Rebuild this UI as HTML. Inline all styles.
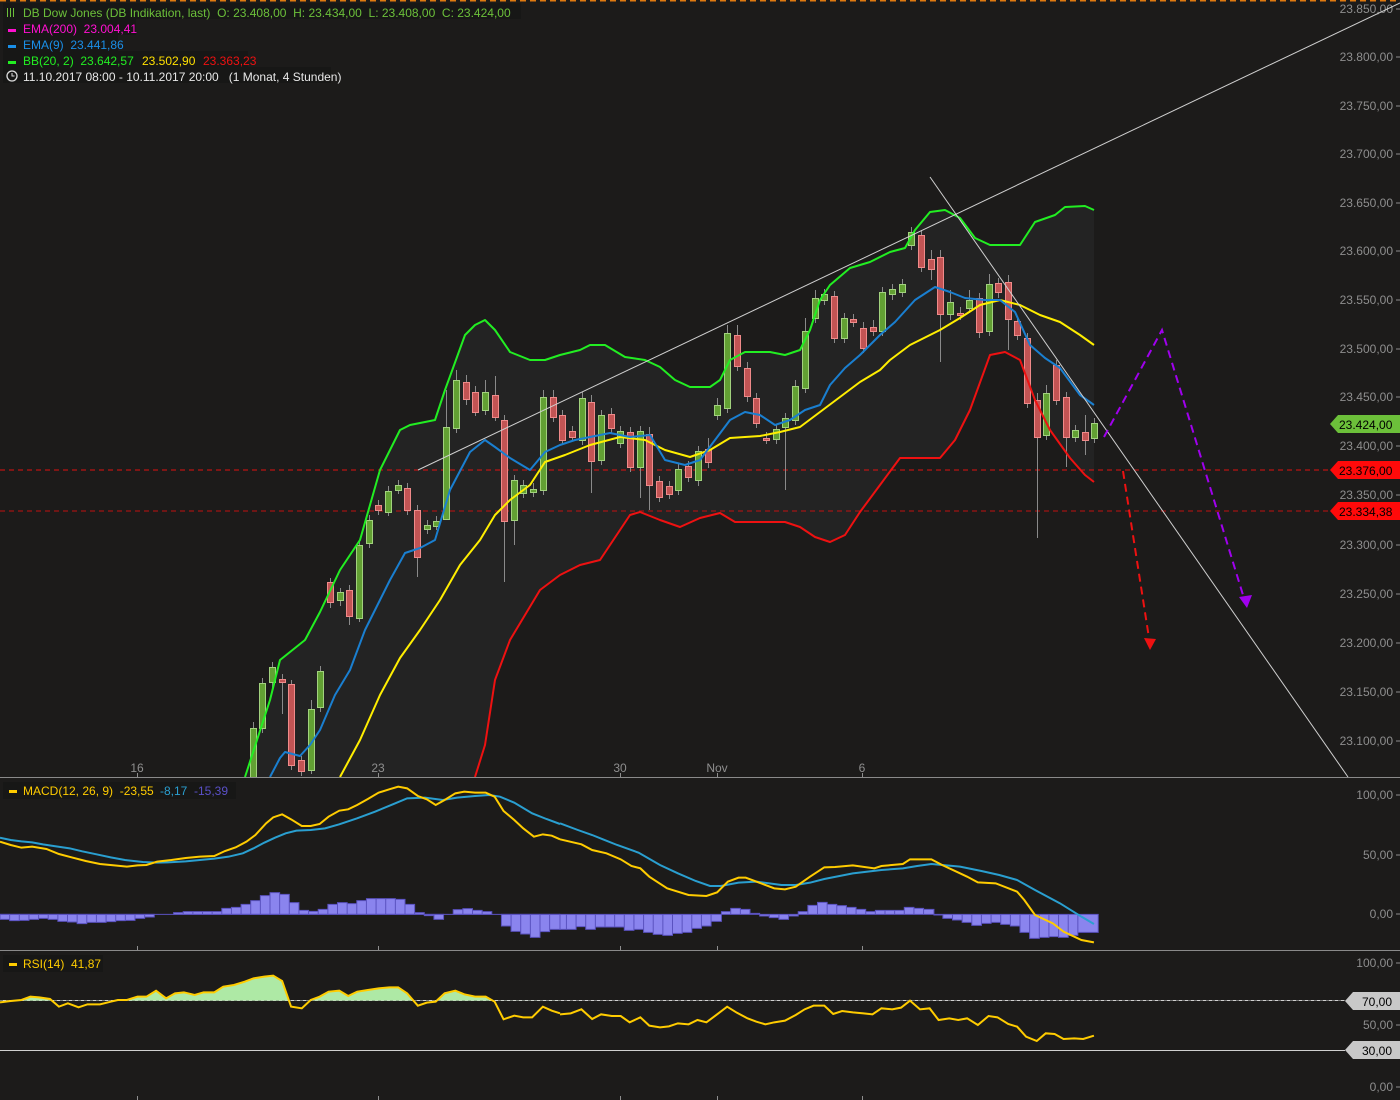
<!DOCTYPE html>
<html><head><meta charset="utf-8"><style>
html,body{margin:0;padding:0;background:#1c1b1a;}
svg{display:block;font-family:"Liberation Sans",sans-serif;}
svg text{white-space:pre;}
</style></head><body>
<svg width="1400" height="1100" viewBox="0 0 1400 1100" xmlns="http://www.w3.org/2000/svg" xml:space="preserve">
<rect width="1400" height="1100" fill="#1c1b1a"/>
<line x1="0" y1="0.5" x2="1400" y2="0.5" stroke="#e07a10" stroke-width="2" stroke-dasharray="6,4"/>

<polygon fill="#232323" points="245,777 270,700 280,660 295,648 305,640 320,612 340,570 360,540 380,470 400,430 410,425 435,420 445,390 465,335 475,325 485,320 495,330 510,352 530,360 545,360 560,355 580,350 590,345 605,345 625,357 645,360 660,367 675,380 690,387 710,387 720,380 730,360 745,352 770,352 785,355 800,350 810,330 820,300 830,285 850,268 870,262 890,252 905,248 915,230 930,212 945,210 960,218 975,238 990,245 1020,245 1035,222 1055,215 1065,207 1085,206 1094,210 1094,482 1085,475 1070,458 1050,430 1035,400 1020,360 1005,352 990,355 970,410 955,440 940,458 900,458 880,485 860,512 845,535 830,542 815,537 800,527 785,522 735,522 720,513 700,518 680,527 660,520 640,512 630,515 610,545 600,560 580,565 560,575 540,590 525,615 510,640 495,680 485,745 475,777"/>

<g fill="#8e8e8e" font-size="12" text-anchor="end">
<text x="1393" y="13">23.850,00</text><text x="1393" y="61">23.800,00</text><text x="1393" y="110">23.750,00</text><text x="1393" y="158">23.700,00</text><text x="1393" y="207">23.650,00</text><text x="1393" y="255">23.600,00</text><text x="1393" y="304">23.550,00</text><text x="1393" y="353">23.500,00</text><text x="1393" y="401">23.450,00</text><text x="1393" y="450">23.400,00</text><text x="1393" y="499">23.350,00</text><text x="1393" y="549">23.300,00</text><text x="1393" y="598">23.250,00</text><text x="1393" y="647">23.200,00</text><text x="1393" y="696">23.150,00</text><text x="1393" y="745">23.100,00</text>
<text x="1393" y="799">100,00</text><text x="1393" y="859">50,00</text><text x="1393" y="918">0,00</text>
<text x="1393" y="967">100,00</text><text x="1393" y="1029">50,00</text><text x="1393" y="1091">0,00</text>
</g>
<g stroke="#8e8e8e" stroke-width="1">
<path d="M1396 9h4M1396 57h4M1396 106h4M1396 154h4M1396 203h4M1396 251h4M1396 300h4M1396 349h4M1396 397h4M1396 446h4M1396 495h4M1396 545h4M1396 594h4M1396 643h4M1396 692h4M1396 741h4M1396 795h4M1396 855h4M1396 914h4M1396 963h4M1396 1025h4M1396 1087h4"/>
</g>

<g fill="#8e8e8e" font-size="12" text-anchor="middle">
<text x="137" y="772">16</text><text x="378" y="772">23</text><text x="620" y="772">30</text><text x="717" y="772">Nov</text><text x="862" y="772">6</text>
</g>
<g stroke="#8e8e8e"><path d="M137.5 773v4M378.5 773v4M620.5 773v4M717.5 773v4M862.5 773v4M137.5 946v4M378.5 946v4M620.5 946v4M717.5 946v4M862.5 946v4M137.5 1096v4M378.5 1096v4M620.5 1096v4M717.5 1096v4M862.5 1096v4"/></g>

<line x1="0" y1="470" x2="1330" y2="470" stroke="#e01010" stroke-dasharray="5,4"/>
<line x1="0" y1="511" x2="1330" y2="511" stroke="#c01010" stroke-dasharray="5,4"/>

<clipPath id="main"><rect x="0" y="0" width="1400" height="777"/></clipPath>
<g clip-path="url(#main)">
<g stroke="#8a8a8a" stroke-width="1">
<path d="M253.5 722v60M262.5 678v55M272.5 662v26M282.5 674v40M291.5 680v90M301.5 756v20M311.5 700v74M320.5 666v46M330.5 578v30M340.5 588v18M349.5 585v40M359.5 540v82M369.5 515v33M378.5 500v15M388.5 486v30M398.5 480v14M407.5 483v32M417.5 505v72M427.5 520v14M436.5 516v14M446.5 390v130M456.5 370v63M466.5 375v30M475.5 386v30M485.5 380v35M495.5 376v45M504.5 415v167M514.5 475v70M523.5 480v18M533.5 483v14M543.5 390v105M553.5 390v32M562.5 410v35M572.5 426v15M582.5 392v53M591.5 395v98M601.5 410v55M611.5 408v25M620.5 426v22M630.5 427v45M640.5 426v72M649.5 427v83M659.5 476v26M669.5 481v18M678.5 464v31M688.5 461v21M698.5 446v40M708.5 438v30M717.5 398v22M727.5 325v88M737.5 325v46M747.5 362v40M756.5 393v35M766.5 432v12M776.5 424v20M785.5 413v77M795.5 380v45M805.5 318v75M815.5 290v33M824.5 289v16M834.5 291v52M844.5 313v30M853.5 314v13M863.5 322v31M873.5 320v16M882.5 287v49M892.5 284v16M902.5 279v18M911.5 227v23M921.5 230v42M931.5 250v30M940.5 250v112M950.5 290v30M960.5 307v13M969.5 290v23M979.5 293v45M989.5 274v62M998.5 278v20M1008.5 275v75M1017.5 316v24M1027.5 333v75M1037.5 393v145M1046.5 385v55M1056.5 360v45M1066.5 392v75M1075.5 425v17M1085.5 415v40M1094.5 418v25"/>
</g>
<g fill="#62a033" stroke="#a2d27e" stroke-width="1">
<rect x="250.5" y="728.5" width="6" height="50"/><rect x="259.5" y="683.5" width="6" height="45"/><rect x="269.5" y="667.5" width="6" height="15"/><rect x="308.5" y="709.5" width="6" height="61"/><rect x="317.5" y="671.5" width="6" height="36"/><rect x="337.5" y="592.5" width="6" height="8"/><rect x="356.5" y="545.5" width="6" height="73"/><rect x="366.5" y="520.5" width="6" height="23"/><rect x="385.5" y="491.5" width="6" height="21"/><rect x="395.5" y="485.5" width="6" height="5"/><rect x="424.5" y="525.5" width="6" height="4"/><rect x="433.5" y="521.5" width="6" height="5"/><rect x="443.5" y="427.5" width="6" height="92"/><rect x="453.5" y="380.5" width="6" height="48"/><rect x="482.5" y="392.5" width="6" height="18"/><rect x="511.5" y="480.5" width="6" height="40"/><rect x="520.5" y="485.5" width="6" height="8"/><rect x="530.5" y="489.5" width="6" height="3"/><rect x="540.5" y="397.5" width="6" height="93"/><rect x="579.5" y="398.5" width="6" height="42"/><rect x="598.5" y="415.5" width="6" height="45"/><rect x="617.5" y="431.5" width="6" height="12"/><rect x="637.5" y="431.5" width="6" height="36"/><rect x="675.5" y="469.5" width="6" height="21"/><rect x="695.5" y="451.5" width="6" height="29"/><rect x="714.5" y="405.5" width="6" height="10"/><rect x="724.5" y="333.5" width="6" height="75"/><rect x="773.5" y="429.5" width="6" height="10"/><rect x="782.5" y="418.5" width="6" height="9"/><rect x="792.5" y="386.5" width="6" height="34"/><rect x="802.5" y="331.5" width="6" height="57"/><rect x="812.5" y="298.5" width="6" height="20"/><rect x="821.5" y="294.5" width="6" height="6"/><rect x="841.5" y="318.5" width="6" height="20"/><rect x="879.5" y="292.5" width="6" height="39"/><rect x="889.5" y="289.5" width="6" height="5"/><rect x="899.5" y="284.5" width="6" height="8"/><rect x="908.5" y="232.5" width="6" height="13"/><rect x="947.5" y="302.5" width="6" height="12"/><rect x="966.5" y="300.5" width="6" height="8"/><rect x="986.5" y="284.5" width="6" height="47"/><rect x="1043.5" y="393.5" width="6" height="42"/><rect x="1072.5" y="430.5" width="6" height="7"/><rect x="1091.5" y="423.5" width="6" height="15"/>
</g>
<g fill="#c25454" stroke="#f08a8a" stroke-width="1">
<rect x="279.5" y="679.5" width="6" height="3"/><rect x="288.5" y="684.5" width="6" height="81"/><rect x="298.5" y="760.5" width="6" height="11"/><rect x="327.5" y="582.5" width="6" height="20"/><rect x="346.5" y="590.5" width="6" height="26"/><rect x="375.5" y="505.5" width="6" height="5"/><rect x="404.5" y="488.5" width="6" height="22"/><rect x="414.5" y="510.5" width="6" height="47"/><rect x="463.5" y="382.5" width="6" height="17"/><rect x="472.5" y="392.5" width="6" height="20"/><rect x="492.5" y="395.5" width="6" height="22"/><rect x="501.5" y="420.5" width="6" height="101"/><rect x="550.5" y="397.5" width="6" height="20"/><rect x="559.5" y="415.5" width="6" height="25"/><rect x="569.5" y="431.5" width="6" height="6"/><rect x="588.5" y="402.5" width="6" height="59"/><rect x="608.5" y="414.5" width="6" height="14"/><rect x="627.5" y="432.5" width="6" height="35"/><rect x="646.5" y="434.5" width="6" height="51"/><rect x="656.5" y="481.5" width="6" height="16"/><rect x="666.5" y="486.5" width="6" height="8"/><rect x="685.5" y="466.5" width="6" height="11"/><rect x="705.5" y="449.5" width="6" height="13"/><rect x="734.5" y="335.5" width="6" height="31"/><rect x="744.5" y="368.5" width="6" height="28"/><rect x="753.5" y="398.5" width="6" height="25"/><rect x="763.5" y="438.5" width="6" height="2"/><rect x="831.5" y="296.5" width="6" height="42"/><rect x="850.5" y="319.5" width="6" height="3"/><rect x="860.5" y="328.5" width="6" height="20"/><rect x="870.5" y="327.5" width="6" height="4"/><rect x="918.5" y="235.5" width="6" height="32"/><rect x="928.5" y="259.5" width="6" height="10"/><rect x="937.5" y="257.5" width="6" height="57"/><rect x="957.5" y="313.5" width="6" height="2"/><rect x="976.5" y="298.5" width="6" height="34"/><rect x="995.5" y="283.5" width="6" height="9"/><rect x="1005.5" y="282.5" width="6" height="37"/><rect x="1014.5" y="321.5" width="6" height="14"/><rect x="1024.5" y="338.5" width="6" height="65"/><rect x="1034.5" y="400.5" width="6" height="37"/><rect x="1053.5" y="365.5" width="6" height="35"/><rect x="1063.5" y="397.5" width="6" height="40"/><rect x="1082.5" y="432.5" width="6" height="8"/>
</g>

<g fill="none" stroke-width="2" stroke-linejoin="round">
<polyline stroke="#ffee00" points="340,777 360,740 380,695 400,658 420,630 440,600 460,565 480,540 495,515 510,500 530,485 545,462 565,455 590,445 620,437 645,440 665,450 690,457 710,450 730,438 760,436 780,432 800,427 820,412 840,397 860,382 880,370 890,360 910,345 940,330 960,318 980,305 1000,300 1020,305 1040,315 1060,322 1080,335 1094,345"/>
<polyline stroke="#1a7fd0" points="270,777 280,758 285,752 300,756 310,745 320,730 335,695 350,670 365,630 380,600 390,580 405,553 420,548 435,540 450,490 470,452 485,440 495,447 510,458 530,470 545,452 560,445 575,440 590,437 610,433 630,437 650,435 665,460 685,465 700,460 715,440 730,420 745,412 760,415 775,425 790,420 805,410 820,405 830,385 845,368 860,355 880,335 895,322 915,300 935,287 950,292 965,298 985,300 1000,300 1015,312 1030,345 1045,358 1060,368 1080,395 1094,405"/>
<polyline stroke="#22ee22" points="245,777 270,700 280,660 295,648 305,640 320,612 340,570 360,540 380,470 400,430 410,425 435,420 445,390 465,335 475,325 485,320 495,330 510,352 530,360 545,360 560,355 580,350 590,345 605,345 625,357 645,360 660,367 675,380 690,387 710,387 720,380 730,360 745,352 770,352 785,355 800,350 810,330 820,300 830,285 850,268 870,262 890,252 905,248 915,230 930,212 945,210 960,218 975,238 990,245 1020,245 1035,222 1055,215 1065,207 1085,206 1094,210"/>
<polyline stroke="#ee1111" points="475,777 485,745 495,680 510,640 525,615 540,590 560,575 580,565 600,560 610,545 630,515 640,512 660,520 680,527 700,518 720,513 735,522 785,522 800,527 815,537 830,542 845,535 860,512 880,485 900,458 915,458 940,458 955,440 970,410 990,355 1005,352 1020,360 1035,400 1050,430 1070,458 1085,475 1094,482"/>
</g>
<line x1="418" y1="470" x2="1400" y2="3" stroke="#cfcfcf" stroke-width="1"/>
<line x1="930" y1="177" x2="1348" y2="777" stroke="#cfcfcf" stroke-width="1"/>
<polyline points="1104,437 1162,330 1243,595" fill="none" stroke="#a000ee" stroke-width="2" stroke-dasharray="8,5"/>
<polygon points="1239,597 1252,595 1247,608" fill="#a000ee"/>
<polyline points="1123,471 1149,638" fill="none" stroke="#ee1111" stroke-width="2" stroke-dasharray="8,5"/>
<polygon points="1144,638 1156,639 1150,650" fill="#ee1111"/>
</g>

<polygon points="1330,424 1338,415 1400,415 1400,433 1338,433" fill="#6cc03a"/>
<text x="1339" y="429" font-size="12" fill="#000">23.424,00</text>
<polygon points="1330,470 1338,461 1400,461 1400,479 1338,479" fill="#ff0a0a"/>
<text x="1339" y="475" font-size="12" fill="#000">23.376,00</text>
<polygon points="1330,511 1338,502 1400,502 1400,520 1338,520" fill="#ff0a0a"/>
<text x="1339" y="516" font-size="12" fill="#000">23.334,38</text>

<rect x="3" y="3" width="518" height="16" fill="#171716"/>
<rect x="3" y="19" width="133" height="16" fill="#171716"/>
<rect x="3" y="35" width="115" height="16" fill="#171716"/>
<rect x="3" y="51" width="245" height="16" fill="#171716"/>
<rect x="3" y="67" width="328" height="16" fill="#171716"/>
<g font-size="12">
<g stroke="#6cc03a" fill="none" stroke-width="1"><path d="M7.5 8v9M10.5 8v9M13.5 8v9"/></g>
<text x="23" y="17" fill="#6cc03a">DB Dow Jones (DB Indikation, last)  O: 23.408,00  H: 23.434,00  L: 23.408,00  C: 23.424,00</text>
<rect x="8" y="29" width="8" height="3" fill="#ff10d0"/><text x="23" y="33" fill="#ff10d0">EMA(200)  23.004,41</text>
<rect x="8" y="45" width="8" height="3" fill="#1a8fe8"/><text x="23" y="49" fill="#1a8fe8">EMA(9)  23.441,86</text>
<rect x="8" y="61" width="8" height="3" fill="#22ee22"/><text x="23" y="65" fill="#22ee22">BB(20, 2)  23.642,57</text><text x="142" y="65" fill="#ffe000">23.502,90</text><text x="203" y="65" fill="#ee1111">23.363,23</text>
<circle cx="12" cy="76" r="5" fill="none" stroke="#ddd" stroke-width="1.3"/><path d="M12 73v3h2.5" stroke="#ddd" fill="none"/>
<text x="23" y="81" fill="#e8e8e8">11.10.2017 08:00 - 10.11.2017 20:00   (1 Monat, 4 Stunden)</text>
</g>

<line x1="0" y1="777.5" x2="1400" y2="777.5" stroke="#8a8a8a"/>
<line x1="0" y1="950.5" x2="1400" y2="950.5" stroke="#8a8a8a"/>

<rect x="3" y="782" width="233" height="17" fill="#171716"/>
<g font-size="12"><rect x="9" y="790" width="8" height="3" fill="#ffcc00"/>
<text x="23" y="795" fill="#ffcc00">MACD(12, 26, 9)  -23,55</text><text x="160" y="795" fill="#2a9fd0">-8,17</text><text x="194" y="795" fill="#5a50c8">-15,39</text></g>

<g transform="translate(0,780) scale(0.35714,0.33333)">
<path fill="#8a84ee" stroke="#5a52c0" stroke-width="1" vector-effect="non-scaling-stroke" d="M0 403V418H27V403ZM27 403V422H54V403ZM54 403V421H81V403ZM81 403V418H108V403ZM108 403V415H135V403ZM135 403V418H162V403ZM162 403V424H189V403ZM189 403V426H216V403ZM216 403V431H243V403ZM243 403V427H270V403ZM270 403V427H297V403ZM297 403V425H324V403ZM324 403V422H351V403ZM351 403V421H378V403ZM378 403V415H405V403ZM405 403V411H432V403ZM486 403V398H513V403ZM513 403V395H540V403ZM540 403V395H567V403ZM567 403V395H594V403ZM594 403V395H621V403ZM621 403V385H648V403ZM648 403V382H675V403ZM675 403V373H702V403ZM702 403V362H729V403ZM729 403V347H756V403ZM756 403V338H783V403ZM783 403V343H810V403ZM810 403V368H837V403ZM837 403V391H864V403ZM864 403V394H891V403ZM891 403V388H918V403ZM918 403V373H945V403ZM945 403V368H972V403ZM972 403V371H999V403ZM999 403V362H1026V403ZM1026 403V356H1053V403ZM1053 403V356H1080V403ZM1080 403V356H1107V403ZM1107 403V358H1134V403ZM1134 403V373H1161V403ZM1161 403V398H1188V403ZM1188 403V407H1215V403ZM1215 403V418H1242V403ZM1269 403V389H1296V403ZM1296 403V386H1323V403ZM1323 403V391H1350V403ZM1350 403V395H1377V403ZM1404 403V438H1431V403ZM1431 403V454H1458V403ZM1458 403V462H1485V403ZM1485 403V472H1512V403ZM1512 403V455H1539V403ZM1539 403V448H1568V403Z"/>
<line x1="0" y1="403" x2="1568" y2="403" stroke="#5a52c0" vector-effect="non-scaling-stroke"/>
<polyline fill="none" stroke="#2a9fd0" stroke-width="2" vector-effect="non-scaling-stroke" points="0,173 30,180 60,184 90,187 120,193 150,198 195,205 230,214 270,223 310,232 350,240 400,246 440,248 470,247 520,244 560,240 600,236 640,230 680,220 710,205 740,188 770,173 800,160 830,152 870,150 910,145 950,133 1000,115 1050,95 1100,73 1140,55 1190,53 1240,60 1280,53 1330,48 1370,45 1400,50 1440,68 1490,100 1530,117 1568,132"/>
<polyline fill="none" stroke="#ffcc00" stroke-width="2" vector-effect="non-scaling-stroke" points="0,185 30,195 60,203 90,200 130,207 165,222 200,232 240,243 280,252 320,256 355,260 385,256 410,255 440,245 480,240 520,234 560,230 600,228 630,213 660,202 690,185 715,165 745,130 765,112 790,103 815,118 845,138 870,138 895,132 920,110 950,92 975,88 1000,75 1030,57 1060,38 1090,28 1115,20 1140,25 1170,48 1195,58 1220,75 1245,60 1275,40 1300,35 1330,38 1360,38 1385,50 1410,93 1440,120 1465,145 1495,170 1520,163 1545,167 1568,178"/>
</g>
<g transform="translate(560,780) scale(0.35714,0.33333)">
<path fill="#8a84ee" stroke="#5a52c0" stroke-width="1" vector-effect="non-scaling-stroke" d="M0 403V448H18V403ZM18 403V448H45V403ZM45 403V440H72V403ZM72 403V448H99V403ZM99 403V441H126V403ZM126 403V441H153V403ZM153 403V441H180V403ZM180 403V451H207V403ZM207 403V448H234V403ZM234 403V457H261V403ZM261 403V463H288V403ZM288 403V466H315V403ZM315 403V460H342V403ZM342 403V457H369V403ZM369 403V445H396V403ZM396 403V438H423V403ZM423 403V424H452V403ZM452 403V395H478V403ZM478 403V385H505V403ZM505 403V388H532V403ZM532 403V400H559V403ZM559 403V408H586V403ZM586 403V413H613V403ZM613 403V418H640V403ZM640 403V408H667V403ZM667 403V395H694V403ZM694 403V376H721V403ZM721 403V367H748V403ZM748 403V373H775V403ZM775 403V377H802V403ZM802 403V382H829V403ZM829 403V388H856V403ZM856 403V395H883V403ZM883 403V391H910V403ZM910 403V391H937V403ZM937 403V391H964V403ZM964 403V382H991V403ZM991 403V385H1018V403ZM1018 403V388H1047V403ZM1047 403V405H1072V403ZM1072 403V415H1099V403ZM1099 403V420H1126V403ZM1126 403V427H1153V403ZM1153 403V436H1180V403ZM1180 403V430H1207V403ZM1207 403V427H1234V403ZM1234 403V433H1261V403ZM1261 403V438H1288V403ZM1288 403V457H1315V403ZM1315 403V475H1342V403ZM1342 403V472H1369V403ZM1369 403V470H1396V403ZM1396 403V472H1423V403ZM1423 403V466H1450V403ZM1450 403V457H1507V403Z"/>
<polyline fill="none" stroke="#2a9fd0" stroke-width="2" vector-effect="non-scaling-stroke" points="0,130 50,150 90,165 120,178 160,195 220,218 280,255 330,280 380,303 420,318 450,318 500,308 550,305 620,315 660,315 700,308 740,297 820,280 900,270 960,265 1000,258 1040,252 1120,260 1180,273 1230,285 1280,300 1330,330 1400,370 1460,410 1495,432"/>
<polyline fill="none" stroke="#ffcc00" stroke-width="2" vector-effect="non-scaling-stroke" points="0,178 60,193 90,210 130,220 170,238 200,258 225,265 250,290 300,325 360,345 410,348 440,337 470,305 500,293 520,293 570,313 600,325 630,328 660,320 700,290 740,262 770,261 820,256 880,265 900,258 960,252 980,238 1040,238 1070,255 1120,280 1140,290 1170,307 1220,310 1280,335 1300,360 1330,405 1380,430 1410,455 1460,480 1495,487"/>
</g>

<rect x="3" y="955" width="100" height="17" fill="#171716"/>
<g font-size="12"><rect x="9" y="963" width="8" height="3" fill="#ffcc00"/><text x="23" y="968" fill="#ffcc00">RSI(14)  41,87</text></g>
<line x1="0" y1="1000.5" x2="1345" y2="1000.5" stroke="#d0d0d0"/>
<line x1="0" y1="1000.5" x2="1345" y2="1000.5" stroke="#777" stroke-dasharray="3,3"/>
<line x1="0" y1="1050.5" x2="1345" y2="1050.5" stroke="#d0d0d0"/>
<polygon points="1345,1001 1353,992 1400,992 1400,1010 1353,1010" fill="#c8c8c8"/>
<text x="1362" y="1006" font-size="12" fill="#000">70,00</text>
<polygon points="1345,1050 1353,1041 1400,1041 1400,1059 1353,1059" fill="#c8c8c8"/>
<text x="1362" y="1055" font-size="12" fill="#000">30,00</text>

<clipPath id="rc"><rect x="0" y="0" width="1600" height="662"/></clipPath>
<g transform="translate(0,780) scale(0.35714,0.33333)">
<polygon clip-path="url(#rc)" fill="#aee9a5" points="0,667 30,663 60,660 85,650 110,652 140,657 165,680 190,670 220,682 245,673 280,673 310,665 330,660 355,660 385,650 410,650 437,632 465,655 490,640 515,637 545,645 570,637 600,637 625,620 655,615 685,605 710,595 740,590 765,587 790,603 815,680 845,685 870,660 895,650 920,635 950,632 975,648 1000,635 1030,630 1060,625 1090,622 1115,622 1140,640 1170,677 1195,668 1220,665 1245,640 1275,632 1300,643 1330,650 1360,650 1385,665 1410,718 1568,700 1568,662 0,662"/>
<polyline fill="none" stroke="#ffcc00" stroke-width="2" vector-effect="non-scaling-stroke" points="0,667 30,663 60,660 85,650 110,652 140,657 165,680 190,670 220,682 245,673 280,673 310,665 330,660 355,660 385,650 410,650 437,632 465,655 490,640 515,637 545,645 570,637 600,637 625,620 655,615 685,605 710,595 740,590 765,587 790,603 815,680 845,685 870,660 895,650 920,635 950,632 975,648 1000,635 1030,630 1060,625 1090,622 1115,622 1140,640 1170,677 1195,668 1220,665 1245,640 1275,632 1300,643 1330,650 1360,650 1385,665 1410,718 1440,707 1465,712 1490,712 1520,680 1545,692 1568,700"/>
</g>
<g transform="translate(560,780) scale(0.35714,0.33333)">
<polyline fill="none" stroke="#ffcc00" stroke-width="2" vector-effect="non-scaling-stroke" points="0,703 30,700 60,688 90,717 115,703 145,708 170,708 195,727 225,712 250,737 280,742 305,739 330,730 360,733 385,720 410,727 440,703 468,680 495,698 525,715 550,725 575,733 600,727 630,722 660,705 685,688 710,677 740,677 765,702 790,693 820,697 850,700 875,703 900,685 930,688 955,683 980,662 1008,688 1035,685 1060,720 1090,715 1115,720 1140,715 1170,735 1200,708 1225,712 1255,732 1280,740 1305,770 1335,783 1360,760 1385,762 1410,777 1440,775 1465,777 1495,767"/>
</g>
</svg>
</body></html>
